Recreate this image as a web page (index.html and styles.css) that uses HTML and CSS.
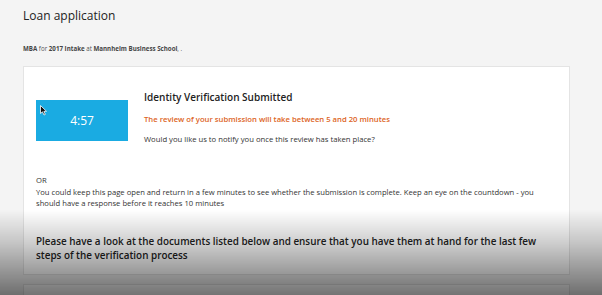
FILE: index.html
```html
<!DOCTYPE html>
<html lang="en">
<head>
  <meta charset="UTF-8">
  <meta name="viewport" content="width=device-width, initial-scale=1.0">
  <title>Loan application</title>
  <link rel="stylesheet" href="styles.css">
</head>
<body>
  <div class="page">
    <h1 class="title">Loan application</h1>
    <p class="intro"><b>MBA</b> for <b>2017 Intake</b> at <b>Mannheim Business School</b>, .</p>

    <div class="card">
      <div class="status">
        <div class="timer">
          4:57
          <svg class="cursor" width="7" height="11" viewBox="0 0 7 11">
            <path d="M0.5 0.5 L0.5 8.5 L2.5 6.8 L4 10 L5.3 9.4 L3.9 6.3 L6.5 6.3 Z" fill="#111" stroke="#fff" stroke-width="0.8"/>
          </svg>
        </div>
        <div class="status-text">
          <h2>Identity Verification Submitted</h2>
          <p class="warn">The review of your submission will take between 5 and 20 minutes</p>
          <p>Would you like us to notify you once this review has taken place?</p>
        </div>
      </div>
      <p class="note">OR<br>You could keep this page open and return in a few minutes to see whether the submission is complete. Keep an eye on the countdown - you should have a response before it reaches 10 minutes</p>
      <h3>Please have a look at the documents listed below and ensure that you have them at hand for the last few steps of the verification process</h3>
    </div>

    <div class="card next"></div>
  </div>
  <div class="shade"></div>
</body>
</html>
```

FILE: styles.css
```css
* {
  padding: 0;
  margin: 0;
  box-sizing: border-box;
}

body {
  background-color: #f4f4f4;
  font-family: "Open Sans", "Liberation Sans", sans-serif;
  color: #333;
  overflow: hidden;
  height: 295px;
}

.page {
  padding: 7px 32px 0 23px;
}

.title {
  font-size: 12px;
  font-weight: 400;
  line-height: 18px;
  color: #222;
}

.intro {
  margin-top: 19px;
  font-size: 6.2px;
  line-height: 10px;
  color: #555;
}

.intro b {
  font-weight: 700;
  color: #444;
}

.card {
  margin-top: 12px;
  background-color: #fff;
  border: 1px solid #e4e4e4;
  padding: 23px 12px 12px 12px;
}

.card.next {
  margin-top: 9px;
  height: 40px;
}

.status {
  display: flex;
  align-items: flex-start;
}

.timer {
  position: relative;
  margin-top: 10px;
  width: 92px;
  height: 41px;
  background-color: #1aabe2;
  color: #fff;
  font-size: 12px;
  display: flex;
  justify-content: center;
  align-items: center;
}

.cursor {
  position: absolute;
  top: 5px;
  left: 4px;
}

.status-text {
  margin-left: 16px;
}

.status-text h2 {
  font-size: 10px;
  font-weight: 600;
  line-height: 14px;
  color: #222;
}

.status-text p {
  margin-top: 8px;
  font-size: 7.7px;
  line-height: 12px;
}

.status-text .warn {
  margin-top: 9px;
  font-weight: 600;
  color: #dd6425;
}

.note {
  margin-top: 30px;
  font-size: 7.65px;
  line-height: 11.5px;
}

.card h3 {
  margin-top: 24px;
  font-size: 9.9px;
  font-weight: 600;
  line-height: 14px;
  color: #222;
}

.shade {
  position: fixed;
  left: 0;
  right: 0;
  bottom: 0;
  height: 85px;
  background: linear-gradient(rgba(0, 0, 0, 0), rgba(0, 0, 0, 0.2) 40%, rgba(0, 0, 0, 0.55));
  pointer-events: none;
}
```
